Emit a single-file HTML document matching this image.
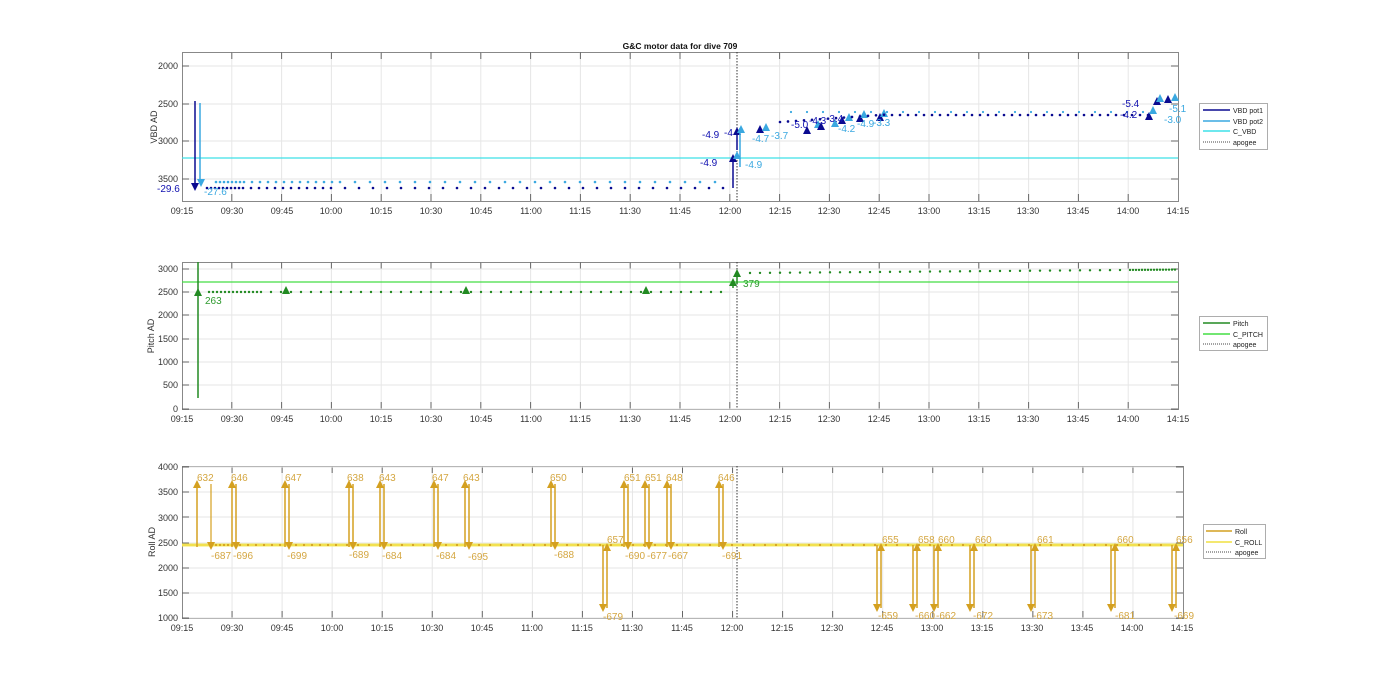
<!DOCTYPE html>
<html><head><meta charset="utf-8"><style>
body{margin:0;background:#fff;width:1400px;height:693px;overflow:hidden}
svg{font-family:"Liberation Sans",sans-serif;font-size:9px}
.tk{fill:#333;text-anchor:middle}
.yl{fill:#333;text-anchor:end}
</style></head><body>
<svg id="s" width="1400" height="693" viewBox="0 0 1400 693">
<rect width="1400" height="693" fill="#fff"/>
<g id="grid"></g>
<g id="data"></g>
<text x="680" y="49" text-anchor="middle" font-weight="bold" font-size="8.5" fill="#111">G&amp;C motor data for dive 709</text>
<!-- x tick labels -->
<g class="tk">
<text x="182" y="214">09:15</text><text x="232" y="214">09:30</text><text x="282" y="214">09:45</text><text x="331" y="214">10:00</text><text x="381" y="214">10:15</text><text x="431" y="214">10:30</text><text x="481" y="214">10:45</text><text x="531" y="214">11:00</text><text x="580" y="214">11:15</text><text x="630" y="214">11:30</text><text x="680" y="214">11:45</text><text x="730" y="214">12:00</text><text x="780" y="214">12:15</text><text x="829" y="214">12:30</text><text x="879" y="214">12:45</text><text x="929" y="214">13:00</text><text x="979" y="214">13:15</text><text x="1028" y="214">13:30</text><text x="1078" y="214">13:45</text><text x="1128" y="214">14:00</text><text x="1178" y="214">14:15</text>
<text x="182" y="422">09:15</text><text x="232" y="422">09:30</text><text x="282" y="422">09:45</text><text x="331" y="422">10:00</text><text x="381" y="422">10:15</text><text x="431" y="422">10:30</text><text x="481" y="422">10:45</text><text x="531" y="422">11:00</text><text x="580" y="422">11:15</text><text x="630" y="422">11:30</text><text x="680" y="422">11:45</text><text x="730" y="422">12:00</text><text x="780" y="422">12:15</text><text x="829" y="422">12:30</text><text x="879" y="422">12:45</text><text x="929" y="422">13:00</text><text x="979" y="422">13:15</text><text x="1028" y="422">13:30</text><text x="1078" y="422">13:45</text><text x="1128" y="422">14:00</text><text x="1178" y="422">14:15</text>
<text x="182" y="631">09:15</text><text x="232" y="631">09:30</text><text x="282" y="631">09:45</text><text x="332" y="631">10:00</text><text x="382" y="631">10:15</text><text x="432" y="631">10:30</text><text x="482" y="631">10:45</text><text x="532" y="631">11:00</text><text x="582" y="631">11:15</text><text x="632" y="631">11:30</text><text x="682" y="631">11:45</text><text x="732" y="631">12:00</text><text x="782" y="631">12:15</text><text x="832" y="631">12:30</text><text x="882" y="631">12:45</text><text x="932" y="631">13:00</text><text x="982" y="631">13:15</text><text x="1032" y="631">13:30</text><text x="1082" y="631">13:45</text><text x="1132" y="631">14:00</text><text x="1182" y="631">14:15</text>
</g>
<g class="yl">
<text x="178" y="69">2000</text><text x="178" y="107">2500</text><text x="178" y="144">3000</text><text x="178" y="182">3500</text>
<text x="178" y="272">3000</text><text x="178" y="295">2500</text><text x="178" y="318">2000</text><text x="178" y="342">1500</text><text x="178" y="365">1000</text><text x="178" y="388">500</text><text x="178" y="412">0</text>
<text x="178" y="470">4000</text><text x="178" y="495">3500</text><text x="178" y="521">3000</text><text x="178" y="546">2500</text><text x="178" y="571">2000</text><text x="178" y="596">1500</text><text x="178" y="621">1000</text>
</g>
<text transform="translate(157,127) rotate(-90)" text-anchor="middle" fill="#333">VBD AD</text>
<text transform="translate(154,336) rotate(-90)" text-anchor="middle" fill="#333">Pitch AD</text>
<text transform="translate(155,542) rotate(-90)" text-anchor="middle" fill="#333">Roll AD</text>
<!-- VBD labels -->
<g font-size="10">
<text x="157" y="192" fill="#1010b0">-29.6</text><text x="204" y="195" fill="#3aa8e0">-27.6</text>
<text x="702" y="138" fill="#1010b0">-4.9</text><text x="724" y="136" fill="#1010b0">-4</text>
<text x="700" y="166" fill="#1010b0">-4.9</text><text x="745" y="168" fill="#3aa8e0">-4.9</text>
<text x="752" y="142" fill="#3aa8e0">-4.7</text><text x="771" y="139" fill="#3aa8e0">-3.7</text>
<text x="791" y="128" fill="#1010b0">-5.0</text><text x="809" y="124" fill="#1010b0">-4.3</text><text x="826" y="122" fill="#1010b0">-3.4</text>
<text x="838" y="132" fill="#3aa8e0">-4.2</text><text x="857" y="127" fill="#3aa8e0">-4.9</text><text x="873" y="126" fill="#3aa8e0">-3.3</text>
<text x="1122" y="107" fill="#1010b0">-5.4</text><text x="1120" y="118" fill="#1010b0">-4.2</text>
<text x="1169" y="112" fill="#3aa8e0">-5.1</text><text x="1164" y="123" fill="#3aa8e0">-3.0</text>
</g>
<g font-size="10" fill="#2e9a2e"><text x="205" y="304">263</text><text x="743" y="287">379</text></g>
<g font-size="10" fill="#d4a640">
<text x="197" y="481">632</text><text x="231" y="481">646</text><text x="285" y="481">647</text><text x="347" y="481">638</text><text x="379" y="481">643</text><text x="432" y="481">647</text><text x="463" y="481">643</text><text x="550" y="481">650</text><text x="624" y="481">651</text><text x="645" y="481">651</text><text x="666" y="481">648</text><text x="718" y="481">646</text>
<text x="607" y="543">657</text><text x="882" y="543">655</text><text x="918" y="543">658</text><text x="938" y="543">660</text><text x="975" y="543">660</text><text x="1037" y="543">661</text><text x="1117" y="543">660</text><text x="1176" y="543">656</text>
<text x="211" y="559">-687</text><text x="233" y="559">-696</text><text x="287" y="559">-699</text><text x="349" y="558">-689</text><text x="382" y="559">-684</text><text x="436" y="559">-684</text><text x="468" y="560">-695</text><text x="554" y="558">-688</text><text x="625" y="559">-690</text><text x="647" y="559">-677</text><text x="668" y="559">-667</text><text x="722" y="559">-691</text>
<text x="603" y="620">-679</text><text x="878" y="619">-659</text><text x="915" y="619">-660</text><text x="936" y="619">-662</text><text x="973" y="619">-672</text><text x="1033" y="619">-673</text><text x="1115" y="619">-681</text><text x="1174" y="619">-669</text>
</g>
<!-- legends -->
<g font-size="7" fill="#222">
<rect x="1199.5" y="103.5" width="68" height="46" fill="#fff" stroke="#999" stroke-width="0.8"/>
<line x1="1203" y1="110" x2="1230" y2="110" stroke="#0a0a90" stroke-width="1.5"/><text x="1233" y="113">VBD pot1</text>
<line x1="1203" y1="121" x2="1230" y2="121" stroke="#3aa8e0" stroke-width="1.5"/><text x="1233" y="124">VBD pot2</text>
<line x1="1203" y1="131" x2="1230" y2="131" stroke="#3ee0e8" stroke-width="1.5"/><text x="1233" y="134">C_VBD</text>
<line x1="1203" y1="142" x2="1230" y2="142" stroke="#444" stroke-dasharray="1,1"/><text x="1233" y="145">apogee</text>
<rect x="1199.5" y="316.5" width="68" height="34" fill="#fff" stroke="#999" stroke-width="0.8"/>
<line x1="1203" y1="323" x2="1230" y2="323" stroke="#228a22" stroke-width="1.5"/><text x="1233" y="326">Pitch</text>
<line x1="1203" y1="334" x2="1230" y2="334" stroke="#44dd44" stroke-width="1.5"/><text x="1233" y="337">C_PITCH</text>
<line x1="1203" y1="344" x2="1230" y2="344" stroke="#444" stroke-dasharray="1,1"/><text x="1233" y="347">apogee</text>
<rect x="1203.5" y="524.5" width="62" height="34" fill="#fff" stroke="#999" stroke-width="0.8"/>
<line x1="1206" y1="531" x2="1232" y2="531" stroke="#d4a020" stroke-width="1.5"/><text x="1235" y="534">Roll</text>
<line x1="1206" y1="542" x2="1232" y2="542" stroke="#f0e040" stroke-width="1.5"/><text x="1235" y="545">C_ROLL</text>
<line x1="1206" y1="552" x2="1232" y2="552" stroke="#444" stroke-dasharray="1,1"/><text x="1235" y="555">apogee</text>
</g>
</svg>
<script>
var NS="http://www.w3.org/2000/svg",G=document.getElementById('grid'),D=document.getElementById('data');
function el(p,t,a){var e=document.createElementNS(NS,t);for(var k in a)e.setAttribute(k,a[k]);p.appendChild(e);return e;}
var axes=[{l:182,r:1178,t:52,b:201,ys:[66,104,141,179]},{l:182,r:1178,t:262,b:409,ys:[269,292,315,339,362,385,409]},{l:182,r:1183,t:466,b:618,ys:[467,492,517,543,568,593,618]}];
axes.forEach(function(a){
 var w=(a.r-a.l)/20;
 el(G,'rect',{x:a.l+.5,y:a.t+.5,width:a.r-a.l,height:a.b-a.t,fill:'#fff',stroke:'#888','stroke-width':1});
 for(var i=1;i<20;i++){var x=a.l+i*w;el(G,'line',{x1:x,x2:x,y1:a.t,y2:a.b,stroke:'#e6e6e6'});
  el(G,'line',{x1:x,x2:x,y1:a.t,y2:a.t+7,stroke:'#666'});el(G,'line',{x1:x,x2:x,y1:a.b-7,y2:a.b,stroke:'#666'});}
 a.ys.forEach(function(y){el(G,'line',{x1:a.l,x2:a.r,y1:y,y2:y,stroke:'#e6e6e6'});el(G,'line',{x1:a.l,x2:a.l+7,y1:y,y2:y,stroke:'#666'});el(G,'line',{x1:a.r-7,x2:a.r,y1:y,y2:y,stroke:'#666'});});
 el(G,'line',{x1:737,x2:737,y1:a.t,y2:a.b,stroke:'#333','stroke-dasharray':'1.5,1.5'});
});
function tri(x,y,c,up,s){s=s||4;el(D,'path',{d:up?'M'+(x-s)+' '+(y+s)+'L'+x+' '+(y-s)+'L'+(x+s)+' '+(y+s)+'Z':'M'+(x-s)+' '+(y-s)+'L'+x+' '+(y+s)+'L'+(x+s)+' '+(y-s)+'Z',fill:c});}
function ln(x1,y1,x2,y2,c,w){el(D,'line',{x1:x1,y1:y1,x2:x2,y2:y2,stroke:c,'stroke-width':w||1.5});}
function dot(x,y,c,r){el(D,'circle',{cx:x,cy:y,r:r||1.3,fill:c});}
// VBD
ln(182,158,1178,158,'#3ee0e8',1.2);
var dk='#0a0a90',lt='#3aa8e0';
ln(195,101,195,187,dk);tri(195,187,dk,0);ln(200,103,200,183,lt);tri(201,183,lt,0);
for(var x=207;x<725;x+=(x<240?4:(x<330?8:14))){dot(x,188,dk);}
for(var x=213;x<725;x+=(x<240?4:(x<330?8:15))){dot(x+3,182,lt);}
ln(733,188,733,158,dk);tri(733,158,dk,1);ln(737,150,737,131,dk);tri(737,131,dk,1);ln(740,167,740,128,lt);tri(741,129,lt,1);tri(737,155,lt,1);
[[760,129,dk],[766,127,lt],[807,130,dk],[818,124,lt],[821,126,dk],[835,123,lt],[842,120,dk],[849,117,lt],[860,118,dk],[864,114,lt],[880,117,dk],[884,113,lt],[1149,116,dk],[1153,110,lt],[1157,101,dk],[1160,98,lt],[1175,97,lt],[1168,99,dk]].forEach(function(p){tri(p[0],p[1],p[2],1);});
for(var x=780;x<1150;x+=8){dot(x,x<890?122-(x-780)*0.07:115,dk);if(x%16==4)dot(x+3,112,lt,1.1);}
// Pitch
ln(182,282,1178,282,'#44dd44',1.2);var g='#228a22';
ln(198,398,198,262,g);tri(198,292,g,1);
for(var x=209;x<725;x+=(x<260?4:10)){dot(x,292,g,1.2);}
tri(286,290,g,1);tri(466,290,g,1);tri(646,290,g,1);ln(733,288,733,280,g);tri(733,282,g,1);ln(737,284,737,275,g);tri(737,273,g,1);
for(var x=750;x<1178;x+=(x<1130?10:3)){dot(x,273-(x-750)*0.008,g,1.2);}
// Roll
var y=function(v){return 618-(v-1000)*0.0503;};ln(182,545,1183,545,'#f5ea60',3);ln(182,545,1183,545,'#f0d840',1);
var o='#d4a020';
function pr(x){ln(x,547,x,484,o);tri(x,484,o,1);ln(x+4,484,x+4,546,o);tri(x+4,546,o,0);}
[232,285,349,380,434,465,551,624,645,667,719].forEach(pr);
ln(197,547,197,484,o);tri(197,484,o,1);ln(211,484,211,546,o,1.2);tri(211,546,o,0);
function pd(x){ln(x,545,x,608,o);tri(x,608,o,0);ln(x+4,608,x+4,547,o);tri(x+4,547,o,1);}
pd(603);[877,913,934,970,1031,1111,1172].forEach(pd);
for(var x=216;x<1170;x+=(x<230?4:(x<330?8:11))){dot(x,545,o,1.1);}
</script>
</body></html>
